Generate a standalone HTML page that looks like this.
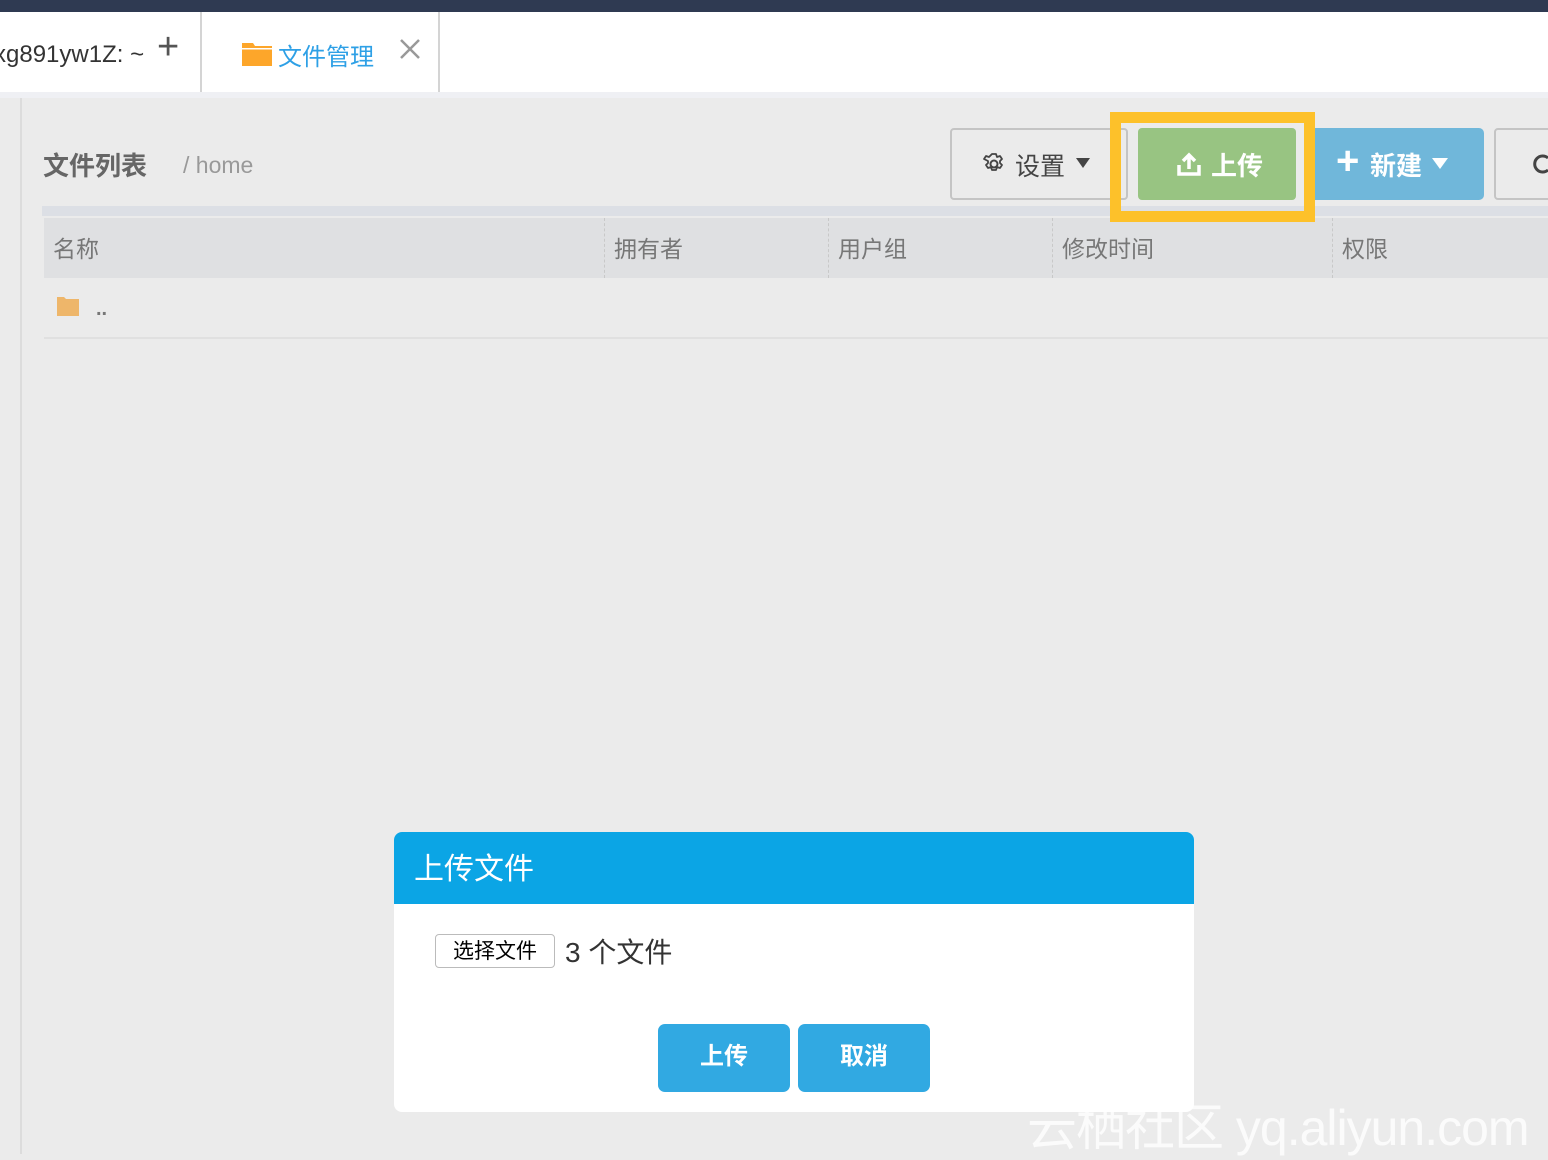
<!DOCTYPE html>
<html><head><meta charset="utf-8"><style>
*{margin:0;padding:0;box-sizing:border-box}
body{width:1548px;height:1154px;overflow:hidden;background:#ebebeb;font-family:"Liberation Sans","Noto Sans CJK SC",sans-serif;position:relative}
.a{position:absolute}
</style></head><body>
<div class="a" style="left:0;top:0;width:1548px;height:12px;background:#2f3a52"></div>
<div class="a" style="left:0;top:12px;width:1548px;height:80px;background:#fff"></div>
<div class="a" style="left:200px;top:12px;width:2px;height:80px;background:#d4d4d4"></div>
<div class="a" style="left:438px;top:12px;width:2px;height:80px;background:#d4d4d4"></div>
<div class="a" style="left:-6px;top:41px;font-size:24px;color:#333">xg891yw1Z: ~</div>
<div class="a" style="left:157px;top:26px;font-size:38px;color:#555;font-weight:300">+</div>
<svg class="a" style="left:242px;top:41px" width="30" height="25"><path d="M0 2h11l2 3h17v20H0z" fill="#fda62a"/><rect x="0" y="7" width="30" height="1.5" fill="#fff"/></svg>
<div class="a" style="left:278px;top:37px;font-size:24px;color:#2ea0e6">文件管理</div>
<svg class="a" style="left:399px;top:38px" width="22" height="22"><path d="M2 2L20 20M20 2L2 20" stroke="#999" stroke-width="2.5"/></svg>
<div class="a" style="left:0;top:92px;width:1548px;height:6px;background:#eff0f4"></div>
<div class="a" style="left:20px;top:98px;width:2px;height:1056px;background:#dcdcdc"></div>
<div class="a" style="left:43px;top:146px;font-size:26px;font-weight:bold;color:#666">文件列表</div>
<div class="a" style="left:183px;top:152px;font-size:23px;color:#999">/ home</div>
<div class="a" style="left:950px;top:128px;width:178px;height:72px;border:2px solid #c4c4c4;border-radius:4px;background:#ebebeb"></div>
<svg class="a" style="left:982px;top:152px" width="24" height="24" viewBox="0 0 24 24"><circle cx="12" cy="12" r="3.5" fill="none" stroke="#444" stroke-width="2"/><path d="M10 2h4l1 3 3-1 2 3-2 2 0 2 2 2-2 3-3-1-1 3h-4l-1-3-3 1-2-3 2-2v-2L2 7l2-3 3 1z" fill="none" stroke="#444" stroke-width="1.8" stroke-linejoin="round"/></svg>
<div class="a" style="left:1015px;top:147px;font-size:25px;color:#444">设置</div>
<svg class="a" style="left:1076px;top:158px" width="14" height="10"><path d="M0 0h14L7 10z" fill="#444"/></svg>
<div class="a" style="left:1138px;top:128px;width:158px;height:72px;background:#98c482;border-radius:4px"></div>
<svg class="a" style="left:1176px;top:151px" width="26" height="26"><path d="M3 14v9h20v-9M13 18V4M7 10l6-6 6 6" fill="none" stroke="#fff" stroke-width="3.5"/></svg>
<div class="a" style="left:1211px;top:146px;font-size:26px;color:#fff;font-weight:bold">上传</div>
<div class="a" style="left:1315px;top:128px;width:169px;height:72px;background:#70b7da;border-radius:0 5px 5px 0"></div>
<div class="a" style="left:1336px;top:139px;font-size:40px;color:#fff;font-weight:bold">+</div>
<div class="a" style="left:1370px;top:146px;font-size:26px;color:#fff;font-weight:bold">新建</div>
<svg class="a" style="left:1432px;top:158px" width="16" height="11"><path d="M0 0h16L8 11z" fill="#fff"/></svg>
<div class="a" style="left:1494px;top:128px;width:70px;height:72px;border:2px solid #c4c4c4;border-radius:4px"></div>
<svg class="a" style="left:1532px;top:152px" width="20" height="24"><path d="M16 6A8 8 0 1 0 16 18" fill="none" stroke="#444" stroke-width="3"/></svg>
<div class="a" style="left:42px;top:206px;width:1506px;height:10px;background:#dcdfe5"></div>
<div class="a" style="left:44px;top:218px;width:1504px;height:60px;background:#dfe0e2"></div>
<div class="a" style="left:604px;top:218px;height:60px;border-left:1px dashed #c8c8c8"></div>
<div class="a" style="left:828px;top:218px;height:60px;border-left:1px dashed #c8c8c8"></div>
<div class="a" style="left:1052px;top:218px;height:60px;border-left:1px dashed #c8c8c8"></div>
<div class="a" style="left:1332px;top:218px;height:60px;border-left:1px dashed #c8c8c8"></div>
<div class="a" style="left:1110px;top:112px;width:205px;height:110px;border:11px solid #fdc12a"></div>
<div class="a" style="left:53px;top:230px;font-size:23px;color:#777">名称</div>
<div class="a" style="left:614px;top:230px;font-size:23px;color:#777">拥有者</div>
<div class="a" style="left:838px;top:230px;font-size:23px;color:#777">用户组</div>
<div class="a" style="left:1062px;top:230px;font-size:23px;color:#777">修改时间</div>
<div class="a" style="left:1342px;top:230px;font-size:23px;color:#777">权限</div>
<svg class="a" style="left:57px;top:297px" width="22" height="19"><path d="M0 0h7l2 2h13v17H0z" fill="#eeb66a"/></svg>
<div class="a" style="left:96px;top:298px;font-size:20px;color:#777;font-weight:bold">..</div>
<div class="a" style="left:44px;top:337px;width:1504px;height:2px;background:#e0e0e0"></div>
<div class="a" style="left:394px;top:832px;width:800px;height:280px;background:#fff;border-radius:8px;overflow:hidden">
<div style="height:72px;background:#0ba5e5;color:#fff;font-size:30px;padding:12px 0 0 20px">上传文件</div>
</div>
<div class="a" style="left:435px;top:934px;width:120px;height:34px;border:1px solid #bbb;border-radius:4px;background:#fff;font-size:21px;color:#000;text-align:center;line-height:34px">选择文件</div>
<div class="a" style="left:565px;top:931px;font-size:28px;color:#333">3 个文件</div>
<div class="a" style="left:658px;top:1024px;width:132px;height:68px;background:#31a9e2;border-radius:7px;color:#fff;font-size:24px;font-weight:bold;text-align:center;line-height:66px">上传</div>
<div class="a" style="left:798px;top:1024px;width:132px;height:68px;background:#31a9e2;border-radius:7px;color:#fff;font-size:24px;font-weight:bold;text-align:center;line-height:66px">取消</div>
<div class="a" style="left:1027px;top:1088px;font-size:50px;color:rgba(255,255,255,0.8);white-space:nowrap;letter-spacing:-1px">云栖社区 yq.aliyun.com</div>
</body></html>
